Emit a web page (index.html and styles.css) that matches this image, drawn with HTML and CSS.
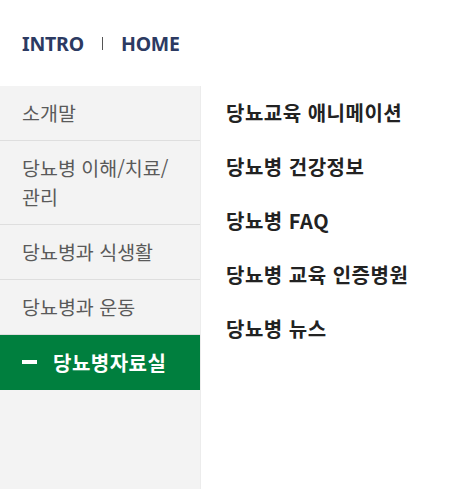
FILE: index.html
```html
<!DOCTYPE html>
<html lang="ko">
<head>
<meta charset="utf-8">
<link rel="stylesheet" href="styles.css">
</head>
<body>
<div class="page">
  <header class="crumb">
    <span class="crumb-item">INTRO</span>
    <span class="crumb-sep"></span>
    <span class="crumb-item">HOME</span>
  </header>
  <div class="main">
    <nav class="side">
      <a class="side-item">소개말</a>
      <a class="side-item">당뇨병 이해/치료/<br>관리</a>
      <a class="side-item">당뇨병과 식생활</a>
      <a class="side-item">당뇨병과 운동</a>
      <a class="side-item active"><span class="dash"></span>당뇨병자료실</a>
    </nav>
    <ul class="sub">
      <li>당뇨교육 애니메이션</li>
      <li>당뇨병 건강정보</li>
      <li>당뇨병 FAQ</li>
      <li>당뇨병 교육 인증병원</li>
      <li>당뇨병 뉴스</li>
    </ul>
  </div>
</div>
</body>
</html>
```

FILE: styles.css
```css
* { box-sizing: border-box; }
html, body { margin: 0; padding: 0; background: #fff; }
body {
  font-family: "Noto Sans CJK KR", "Noto Sans", sans-serif;
  width: 465px;
  height: 489px;
  overflow: hidden;
}
.page { display: flex; flex-direction: column; height: 489px; }
.crumb {
  height: 86px;
  display: flex;
  align-items: center;
  padding: 0 0 0 22px;
  gap: 18px;
}
.crumb-item {
  font-family: "Noto Sans", sans-serif;
  font-weight: 700;
  font-size: 19.5px;
  color: #2c3a62;
  letter-spacing: -0.2px;
}
.crumb-sep { width: 1px; height: 13px; background: #555; }
.main { flex: 1; display: flex; }
.side {
  width: 201px;
  background: #f3f3f3;
  border-right: 1px solid #ececec;
  display: flex;
  flex-direction: column;
}
.side-item {
  display: flex;
  align-items: center;
  padding: 12px 10px 13px 22px;
  min-height: 55px;
  font-size: 19.5px;
  line-height: 29px;
  color: #5a5a5a;
  border-bottom: 1px solid #dedede;
}
.side-item.active {
  background: #007f3e;
  color: #fff;
  font-size: 20px;
  font-weight: 700;
  letter-spacing: 0.5px;
  border-bottom: none;
}
.dash {
  width: 15px;
  height: 4px;
  background: #fff;
  margin-right: 16px;
}
.sub {
  list-style: none;
  margin: 0;
  padding: 0 0 0 25px;
  display: flex;
  flex-direction: column;
}
.sub li {
  font-size: 20px;
  font-weight: 700;
  letter-spacing: 0.5px;
  line-height: 54px;
  height: 54px;
  color: #222;
}
```
